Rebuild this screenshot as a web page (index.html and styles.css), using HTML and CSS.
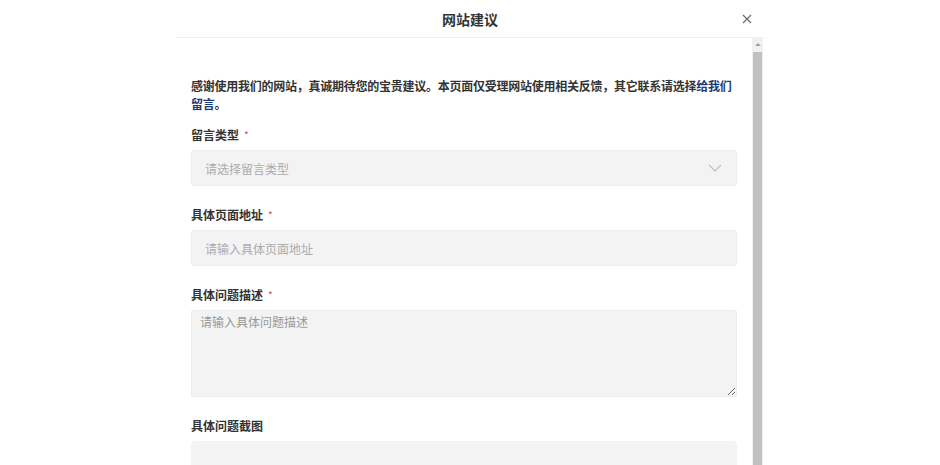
FILE: index.html
```html
<!DOCTYPE html>
<html lang="zh-CN">
<head>
<meta charset="utf-8">
<title>网站建议</title>
<link rel="stylesheet" href="styles.css">
</head>
<body>
<div class="modal">
  <div class="modal-header">
    <h2 class="modal-title">网站建议</h2>
    <button class="close-btn" aria-label="关闭">
      <svg width="10" height="10" viewBox="0 0 10 10"><path d="M1 1L9 9M9 1L1 9" stroke="#666" stroke-width="1.1" fill="none"/></svg>
    </button>
  </div>
  <div class="modal-body">
    <div class="content">
      <p class="intro">感谢使用我们的网站，真诚期待您的宝贵建议。本页面仅受理网站使用相关反馈，其它联系请选择<a class="link" href="#">给我们留言</a>。</p>
      <div class="field">
        <label class="label">留言类型<span class="req">*</span></label>
        <div class="select">
          <span class="placeholder">请选择留言类型</span>
          <svg class="chevron" width="14" height="8" viewBox="0 0 14 8"><path d="M1 1L7 7L13 1" stroke="#bdbdbd" stroke-width="1.1" fill="none"/></svg>
        </div>
      </div>
      <div class="field">
        <label class="label">具体页面地址<span class="req">*</span></label>
        <input class="input" type="text" placeholder="请输入具体页面地址">
      </div>
      <div class="field">
        <label class="label">具体问题描述<span class="req">*</span></label>
        <textarea class="textarea" placeholder="请输入具体问题描述"></textarea>
      </div>
      <div class="field">
        <label class="label">具体问题截图</label>
        <div class="upload"></div>
      </div>
    </div>
    <div class="scrollbar">
      <div class="scroll-btn"><span class="tri"></span></div>
      <div class="thumb"></div>
    </div>
  </div>
</div>
</body>
</html>
```

FILE: styles.css
```css
* { box-sizing: border-box; }
html, body {
  margin: 0;
  padding: 0;
  background: #fff;
  height: 465px;
  overflow: hidden;
}
body {
  font-family: "Noto Sans CJK SC", "Noto Sans", "Liberation Sans", sans-serif;
  color: #333;
}
.modal {
  width: 588px;
  margin: 0 0 0 176px;
  background: #fff;
}
.modal-header {
  height: 38px;
  border-bottom: 1px solid #f0f0f0;
  display: flex;
  align-items: center;
  justify-content: center;
  position: relative;
}
.modal-title {
  margin: 0;
  font-size: 14px;
  font-weight: 700;
  color: #333;
  line-height: 20px;
}
.close-btn {
  position: absolute;
  right: 12px;
  top: 14px;
  width: 10px;
  height: 10px;
  padding: 0;
  border: 0;
  background: none;
  display: flex;
}
.modal-body {
  display: flex;
  height: 427px;
}
.content {
  flex: 1;
  overflow: hidden;
  padding: 39px 15px 0 15px;
}
.intro {
  margin: 0 0 13px;
  font-size: 12px;
  letter-spacing: -0.25px;
  line-height: 18px;
  font-weight: 700;
  color: #333;
}
.link {
  color: #1b3a72;
  text-decoration: none;
}
.field {
  margin-bottom: 20px;
}
.label {
  display: flex;
  align-items: center;
  height: 18px;
  font-size: 12px;
  font-weight: 700;
  line-height: 18px;
  margin-bottom: 6px;
  color: #333;
}
.req {
  color: #e5484d;
  font-size: 10px;
  line-height: 10px;
  margin-left: 5px;
  font-weight: 400;
}
.select, .input {
  width: 100%;
  height: 36px;
  background: #f3f3f3;
  border: 1px solid #eeeeee;
  border-radius: 4px;
  padding: 0 14px 0 13px;
  display: flex;
  align-items: center;
  justify-content: space-between;
  font-family: inherit;
  font-size: 12px;
  outline: none;
}
.placeholder {
  color: #acacac;
  font-size: 12px;
}
.input::placeholder {
  color: #acacac;
  opacity: 1;
}
.textarea::placeholder {
  color: #999999;
  opacity: 1;
}
.textarea {
  display: block;
  width: 100%;
  height: 87px;
  background: #f3f3f3;
  border: 1px solid #ececec;
  border-radius: 2px;
  padding: 2px 8px;
  font-family: inherit;
  font-size: 12px;
  line-height: 18px;
  resize: vertical;
  outline: none;
}
.upload {
  width: 100%;
  height: 60px;
  background: #f3f3f3;
  border-radius: 4px;
}
.scrollbar {
  width: 11px;
  margin-right: 1px;
  background: #f1f1f1;
  display: flex;
  flex-direction: column;
}
.scroll-btn {
  height: 13px;
  display: flex;
  align-items: center;
  justify-content: center;
}
.tri {
  width: 0;
  height: 0;
  border-left: 3px solid transparent;
  border-right: 3px solid transparent;
  border-bottom: 3px solid #a3a3a3;
}
.thumb {
  flex: 1;
  background: #c1c1c1;
  margin: 1px 1px 0 1px;
}
```
